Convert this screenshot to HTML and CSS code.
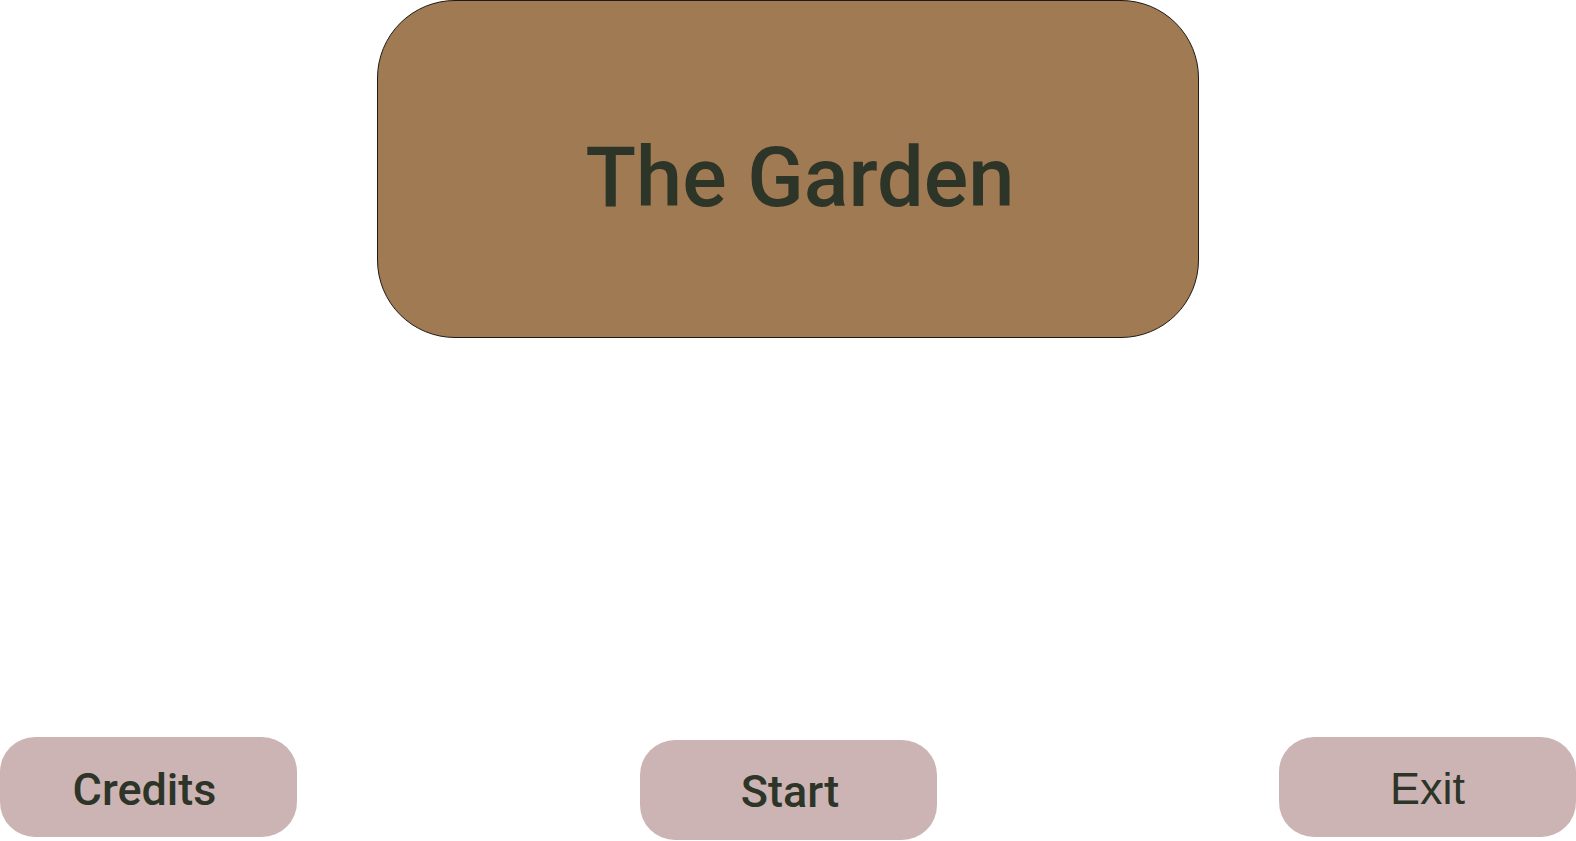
FILE: index.html
```html
<!DOCTYPE html>
<html lang="en">
<head>
<meta charset="utf-8">
<title>The Garden</title>
<link rel="stylesheet" href="styles.css">
</head>
<body>
<div class="screen">
  <header class="title-box">
    <h1 class="title">The Garden</h1>
  </header>
  <nav class="menu">
    <button class="btn btn-credits">Credits</button>
    <button class="btn btn-start">Start</button>
    <button class="btn btn-exit">Exit</button>
  </nav>
</div>
</body>
</html>
```

FILE: styles.css
```css
html, body {
  margin: 0;
  padding: 0;
  background: #ffffff;
}

.screen {
  width: 1576px;
  height: 841px;
  display: flex;
  flex-direction: column;
  align-items: center;
  justify-content: space-between;
  box-sizing: border-box;
  padding-bottom: 4px;
}

.title-box {
  width: 822px;
  height: 338px;
  box-sizing: border-box;
  background: #a07a52;
  border: 1px solid #1e1a14;
  border-radius: 78px;
  display: flex;
  align-items: center;
  justify-content: center;
  padding: 16px 0 0 24px;
}

.title {
  margin: 0;
  font-family: Roboto, "DejaVu Sans", sans-serif;
  font-weight: 500;
  font-size: 83px;
  letter-spacing: 0;
  color: #2d3529;
  line-height: 1;
}

.menu {
  width: 100%;
  display: flex;
  justify-content: space-between;
  align-items: flex-start;
}

.btn {
  width: 297px;
  height: 100px;
  box-sizing: border-box;
  border: none;
  border-radius: 35px;
  background: #cdb4b4;
  color: #2d3529;
  font-family: Roboto, "DejaVu Sans", sans-serif;
  font-weight: 500;
  font-size: 45px;
  letter-spacing: 0;
  padding: 5px 0 0 0;
  display: flex;
  align-items: center;
  justify-content: center;
}

.btn-credits {
  padding-right: 8px;
}

.btn-start {
  margin-top: 3px;
  margin-bottom: -3px;
  padding-top: 2px;
  padding-left: 4px;
}

.btn-exit {
  font-family: "Liberation Sans", Arial, sans-serif;
  font-weight: 400;
  font-size: 45px;
  padding-top: 4px;
}
```
